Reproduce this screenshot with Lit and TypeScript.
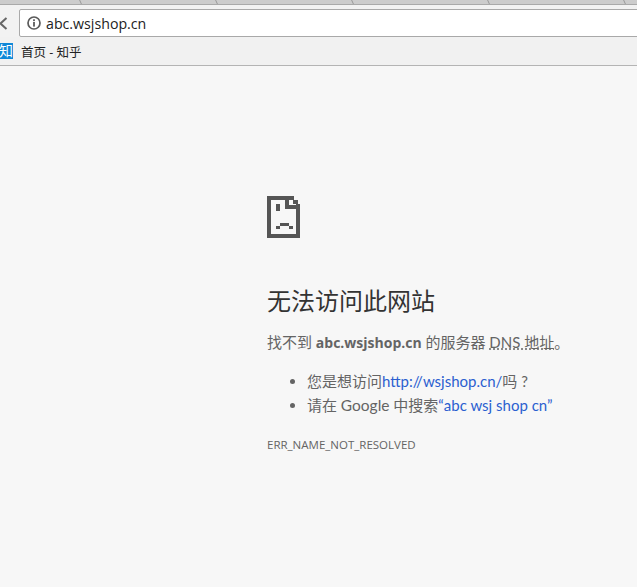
import { LitElement, html, css } from "lit";
import { customElement } from "lit/decorators.js";

@customElement("app-root")
export class AppRoot extends LitElement {
  static styles = css`
    :host {
      display: flex;
      flex-direction: column;
      width: 637px;
      height: 587px;
      overflow: hidden;
      background: #f7f7f7;
      font-family: "Lato", "Noto Sans CJK SC", sans-serif;
      color: #646464;
    }
    .tabs {
      height: 4px;
      background: #cccccc;
      border-bottom: 1px solid #a9a9a9;
      display: flex;
      flex: none;
      overflow: hidden;
      padding-left: 80px;
    }
    .tab { width: 136px; box-sizing: border-box; flex: none; border-left: 1px solid #9a9a9a; transform: skewX(25deg); }
    .toolbar {
      height: 32px;
      flex: none;
      box-sizing: border-box;
      background: #f2f2f2;
      display: flex;
      align-items: flex-start;
      padding-top: 4px;
    }
    .back { width: 19px; flex: none; height: 28px; display: flex; align-items: center; }
    .back svg { margin-left: -1px; }
    .omni {
      flex: 1;
      height: 28px;
      box-sizing: border-box;
      margin-right: -4px;
      background: #fff;
      border: 1px solid #a9a9a9;
      border-radius: 2px;
      display: flex;
      align-items: center;
      gap: 5px;
      padding-left: 7px;
      font-family: "Open Sans", sans-serif;
      font-size: 14.2px;
      color: #222;
    }
    .bookmarks {
      height: 29px;
      flex: none;
      box-sizing: border-box;
      background: #f1f1f1;
      border-bottom: 1px solid #b4b4b4;
      display: flex;
      align-items: center;
      gap: 8px;
      font-size: 12px;
      color: #222;
    }
    .bm { font-size: 12.5px; font-family: "Open Sans", "Noto Sans CJK SC", sans-serif; }
    .fav {
      width: 13px;
      height: 16px;
      background: #0f88d8;
      color: #fff;
      font-size: 14px;
      line-height: 16px;
      overflow: hidden;
      white-space: nowrap;
      display: flex;
      justify-content: flex-end;
    }
    .page {
      flex: 1;
      padding: 130px 0 0 267px;
    }
    .sad { display: block; }
    h1 {
      margin: 48px 0 0;
      font-size: 24px;
      font-weight: 400;
      line-height: 30px;
      color: #333;
    }
    p { margin: 15px 0 0; font-size: 15px; line-height: 22px; }
    b { font-family: "Open Sans", sans-serif; font-size: 14px; font-weight: 700; }
    abbr { text-decoration: underline dotted; }
    ul { margin: 15px 0 0; padding: 0 0 0 40px; font-size: 15px; line-height: 24px; }
    a { color: #2b5fd0; text-decoration: none; }
    .google { font-size: 15.5px; }
    .code { margin-top: 18px; font-family: "Open Sans", sans-serif; font-size: 11.5px; line-height: 20px; }
  `;

  render() {
    return html`
      <div class="tabs">
        <div class="tab"></div><div class="tab"></div><div class="tab"></div><div class="tab"></div><div class="tab"></div>
      </div>
      <div class="toolbar">
        <div class="back">
          <svg width="9" height="13" viewBox="0 0 9 13"><path d="M7.5 1 L1.5 6.5 L7.5 12" fill="none" stroke="#666" stroke-width="2"/></svg>
        </div>
        <div class="omni">
          <svg width="14" height="14" viewBox="0 0 14 14"><circle cx="7" cy="7" r="6" fill="none" stroke="#5a5a5a" stroke-width="1.7"/><rect x="6.1" y="6" width="1.8" height="4.6" fill="#5a5a5a"/><rect x="6.1" y="3.3" width="1.8" height="1.8" fill="#5a5a5a"/></svg>
          <span>abc.wsjshop.cn</span>
        </div>
      </div>
      <div class="bookmarks">
        <div class="fav"><span>知</span></div>
        <span class="bm">首页 - 知乎</span>
      </div>
      <div class="page">
        <svg class="sad" width="33" height="42" viewBox="0 0 33 42" shape-rendering="crispEdges" fill="#555">
          <path d="M0 0H27V4H31V8H33V42H0ZM4 4V38H29V13H18V4ZM22 4V9H29V8H26V4Z" fill-rule="evenodd"/>
          <rect x="9" y="8" width="4" height="7"/>
          <rect x="13" y="27" width="9" height="3"/>
          <rect x="9" y="30" width="4" height="3"/>
          <rect x="22" y="30" width="4" height="3"/>
        </svg>
        <h1>无法访问此网站</h1>
        <p>找不到 <b>abc.wsjshop.cn</b> 的服务器 <abbr>DNS 地址</abbr>。</p>
        <ul>
          <li>您是想访问<a>http://wsjshop.cn/</a>吗 ?</li>
          <li>请在 <span class="google">Google</span> 中搜索<a>“abc wsj shop cn”</a></li>
        </ul>
        <div class="code">ERR_NAME_NOT_RESOLVED</div>
      </div>
    `;
  }
}
